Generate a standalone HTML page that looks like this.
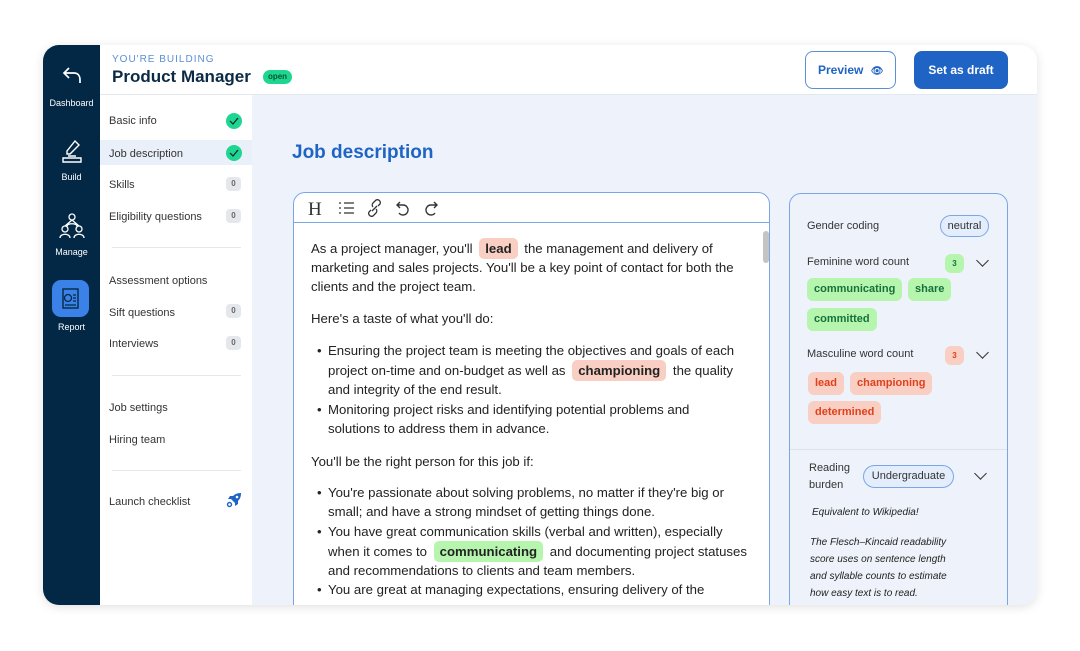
<!DOCTYPE html>
<html><head><meta charset="utf-8"><style>
*{box-sizing:border-box;margin:0;padding:0}
body{width:1080px;height:651px;background:#fff;font-family:"Liberation Sans",sans-serif;position:relative;overflow:hidden;color:#222}
.card{position:absolute;left:43px;top:45px;width:994px;height:560px;border-radius:16px;overflow:hidden;background:#eef3fb;box-shadow:0 2px 10px rgba(0,0,0,.12)}
.nav{position:absolute;left:0;top:0;width:57px;height:560px;background:#032845;color:#fff;font-size:9px;text-align:center}
.nav .it{position:absolute;left:0;width:57px}
.side{position:absolute;left:57px;top:50px;width:152px;height:510px;background:#fff}
.hdr{position:absolute;left:57px;top:0;width:937px;height:50px;background:#fff;border-bottom:1px solid #e3e8ef}
.a{position:absolute;white-space:nowrap}
.si{position:absolute;left:9px;font-size:11px;color:#333;top:2px}
.badge{position:absolute;left:126px;width:15px;height:14px;border-radius:4px;background:#e4e7eb;color:#666;font-size:8px;font-weight:bold;text-align:center;line-height:14px}
.chk{position:absolute;left:126px;width:16px;height:16px;border-radius:50%;background:#1ed68f}
.hr{position:absolute;left:12px;width:129px;height:1px;background:#e8e8e8}
.ed{position:absolute;left:250px;top:147px;width:477px;height:420px;background:#fff;border:1px solid #7aa6e6;border-radius:12px 12px 0 0}
.tb{height:30px;border-bottom:1px solid #7aa6e6}
.ln{position:absolute;font-size:13.2px;white-space:nowrap;color:#222;line-height:19px}
.hl{display:inline-block;padding:0 6px;border-radius:5px;font-weight:bold;line-height:21px;margin:0 3px}
.r{background:#f9cfc3}.g{background:#b6f5ae}
.dot{position:absolute;left:-11px}
.rp{position:absolute;left:746px;top:148px;width:219px;height:420px;background:#eef3fb;border:1px solid #7aa6e6;border-radius:12px 12px 0 0}
.t{position:absolute;font-size:11px;color:#333;white-space:nowrap}
.chip{position:absolute;height:23px;line-height:23px;padding:0 7px;border-radius:6px;font-size:11px;font-weight:bold}
.cg{background:#b6f5ae;color:#17713a}.cr{background:#f9cfc3;color:#e0401c}
.pill{position:absolute;border:1px solid #7aa6e6;border-radius:12px;background:#e4edfb;font-size:11px;color:#333;text-align:center}
.cv{position:absolute;width:9px;height:9px;border-right:1.5px solid #333;border-bottom:1.5px solid #333;transform:rotate(45deg)}
.it2{position:absolute;font-size:10px;font-style:italic;color:#222;white-space:nowrap;line-height:17px}
</style></head><body>
<div class="card">
 <div class="nav">
  <div class="it" style="top:20px"><svg width="22" height="20" viewBox="0 0 22 20"><path d="M8 3 L3 8 L8 13 M3 8 H13 C17 8 19 11 19 15 V18" fill="none" stroke="#fff" stroke-width="1.7"/></svg></div>
  <div class="it" style="top:53px">Dashboard</div>
  <div class="it" style="top:92px"><svg width="26" height="28" viewBox="0 0 26 28"><path d="M16 4 L20 8 L11 17 L8 17 L8 14 Z M4 21 H22 V25 H4 Z M9 19 H17" fill="none" stroke="#fff" stroke-width="1.4"/></svg></div>
  <div class="it" style="top:127px">Build</div>
  <div class="it" style="top:166px"><svg width="26" height="28" viewBox="0 0 26 28"><circle cx="13" cy="6" r="3" fill="none" stroke="#fff" stroke-width="1.3"/><circle cx="6" cy="18" r="3" fill="none" stroke="#fff" stroke-width="1.3"/><circle cx="20" cy="18" r="3" fill="none" stroke="#fff" stroke-width="1.3"/><path d="M13 9 L6 15 M13 9 L20 15 M1 27 C1 22 11 22 11 27 M15 27 C15 22 25 22 25 27 M8 15 C9 12 17 12 18 15" fill="none" stroke="#fff" stroke-width="1.3"/></svg></div>
  <div class="it" style="top:202px">Manage</div>
  <div style="position:absolute;left:9px;top:235px;width:37px;height:37px;border-radius:9px;background:#3b82e8"><svg width="37" height="37" viewBox="0 0 37 37"><rect x="11" y="9" width="15" height="19" fill="none" stroke="#032845" stroke-width="1.4"/><circle cx="16" cy="18" r="3.5" fill="none" stroke="#032845" stroke-width="1.3"/><path d="M21 15 H24 M21 18 H24 M21 21 H24 M13 25 H24" stroke="#032845" stroke-width="1.2"/></svg></div>
  <div class="it" style="top:277px">Report</div>
 </div>
 <div class="hdr">
  <div class="a" style="left:12px;top:9px;font-size:10px;letter-spacing:1px;color:#5b8fd6">YOU'RE BUILDING</div>
  <div class="a" style="left:12px;top:22px;font-size:17px;font-weight:bold;color:#0d2a45">Product Manager</div>
  <div class="a" style="left:163px;top:25px;width:29px;height:14px;border-radius:7px;background:#1ed68f;font-size:8px;font-weight:bold;text-align:center;line-height:14px;color:#053">open</div>
  <div class="a" style="left:705px;top:6px;width:91px;height:38px;border:1px solid #5b8fd6;border-radius:8px;color:#1f64c4;font-size:12px;font-weight:bold;line-height:36px;padding-left:12px">Preview <span style="font-size:10px;margin-left:4px">👁</span></div>
  <div class="a" style="left:814px;top:6px;width:94px;height:38px;border-radius:8px;background:#1f64c4;color:#fff;font-size:12px;font-weight:bold;line-height:38px;text-align:center">Set as draft</div>
 </div>
 <div class="side">
  <div class="si" style="top:20px">Basic info</div><div class="chk" style="top:18px"><svg width="16" height="16"><path d="M4 8 L7 11 L12 5" fill="none" stroke="#123" stroke-width="1.2"/></svg></div>
  <div style="position:absolute;left:0;top:45px;width:152px;height:25px;background:#eaf0fa"></div>
  <div class="si" style="top:53px">Job description</div><div class="chk" style="top:50px"><svg width="16" height="16"><path d="M4 8 L7 11 L12 5" fill="none" stroke="#123" stroke-width="1.2"/></svg></div>
  <div class="si" style="top:84px">Skills</div><div class="badge" style="top:82px">0</div>
  <div class="si" style="top:116px">Eligibility questions</div><div class="badge" style="top:114px">0</div>
  <div class="hr" style="top:152px"></div>
  <div class="si" style="top:180px">Assessment options</div>
  <div class="si" style="top:212px">Sift questions</div><div class="badge" style="top:209px">0</div>
  <div class="si" style="top:243px">Interviews</div><div class="badge" style="top:241px">0</div>
  <div class="hr" style="top:280px"></div>
  <div class="si" style="top:307px">Job settings</div>
  <div class="si" style="top:339px">Hiring team</div>
  <div class="hr" style="top:375px"></div>
  <div class="si" style="top:401px">Launch checklist</div>
  <svg style="position:absolute;left:126px;top:397px" width="16" height="16" viewBox="0 0 16 16"><path d="M15 1 C10 1 7 3 5 7 L9 11 C13 9 15 6 15 1 Z" fill="#1f64c4"/><path d="M5 7 L2 7 L4 4 L8 4 Z M9 11 L9 14 L12 12 L12 8 Z" fill="#1f64c4"/><circle cx="3.5" cy="12.5" r="2" fill="none" stroke="#1f64c4" stroke-width="1.4"/><circle cx="11" cy="5" r="1.3" fill="#fff"/></svg>
 </div>
 <div class="a" style="left:249px;top:97px;font-size:19px;font-weight:bold;color:#1f64c4">Job description</div>
 <div class="ed">
  <div class="tb"><svg width="160" height="30"><text x="14" y="22" font-family="Liberation Serif" font-size="19" fill="#333">H</text><path d="M45 10h2M45 15h2M45 20h2M50 10h10M50 15h10M50 20h10" stroke="#333" stroke-width="1.3"/><path d="M77 17 l-2 2 a3 3 0 0 0 4 4 l3-3 a3 3 0 0 0 0-4 M84 13 l2-2 a3 3 0 0 0-4-4 l-3 3 a3 3 0 0 0 0 4 M78 18 l5-5" fill="none" stroke="#333" stroke-width="1.3"/><path d="M106 9 l-3 3 l3 3 M103 12 h6 a5 5 0 1 1 -4 8" fill="none" stroke="#333" stroke-width="1.4"/><path d="M140 9 l3 3 l-3 3 M143 12 h-6 a5 5 0 1 0 4 8" fill="none" stroke="#333" stroke-width="1.4"/></svg></div>
  <div style="position:absolute;right:0;top:38px;width:6px;height:32px;border-radius:3px;background:#c4c4c4"></div>
 </div>
 <div class="ln" style="left:268px;top:193px">As a project manager, you'll <span class="hl r">lead</span> the management and delivery of</div>
 <div class="ln" style="left:268px;top:213px">marketing and sales projects. You'll be a key point of contact for both the</div>
 <div class="ln" style="left:268px;top:232px">clients and the project team.</div>
 <div class="ln" style="left:268px;top:264px">Here's a taste of what you'll do:</div>
 <div class="ln" style="left:285px;top:296px"><span class="dot">•</span>Ensuring the project team is meeting the objectives and goals of each</div>
 <div class="ln" style="left:285px;top:315px">project on-time and on-budget as well as <span class="hl r">championing</span> the quality</div>
 <div class="ln" style="left:285px;top:335px">and integrity of the end result.</div>
 <div class="ln" style="left:285px;top:355px"><span class="dot">•</span>Monitoring project risks and identifying potential problems and</div>
 <div class="ln" style="left:285px;top:374px">solutions to address them in advance.</div>
 <div class="ln" style="left:268px;top:407px">You'll be the right person for this job if:</div>
 <div class="ln" style="left:285px;top:438px"><span class="dot">•</span>You're passionate about solving problems, no matter if they're big or</div>
 <div class="ln" style="left:285px;top:457px">small; and have a strong mindset of getting things done.</div>
 <div class="ln" style="left:285px;top:477px"><span class="dot">•</span>You have great communication skills (verbal and written), especially</div>
 <div class="ln" style="left:285px;top:496px">when it comes to <span class="hl g">communicating</span> and documenting project statuses</div>
 <div class="ln" style="left:285px;top:516px">and recommendations to clients and team members.</div>
 <div class="ln" style="left:285px;top:535px"><span class="dot">•</span>You are great at managing expectations, ensuring delivery of the</div>
 <div class="rp">
  <div class="t" style="left:17px;top:26px">Gender coding</div>
  <div class="pill" style="left:150px;top:21px;width:49px;height:22px;line-height:20px">neutral</div>
  <div class="t" style="left:17px;top:62px">Feminine word count</div>
  <div class="chip cg" style="left:155px;top:60px;width:19px;height:19px;line-height:19px;padding:0;text-align:center;font-size:8px">3</div>
  <div class="cv" style="left:188px;top:62px"></div>
  <div class="chip cg" style="left:17px;top:84px">communicating</div>
  <div class="chip cg" style="left:118px;top:84px">share</div>
  <div class="chip cg" style="left:17px;top:114px">committed</div>
  <div class="t" style="left:17px;top:154px">Masculine word count</div>
  <div class="chip cr" style="left:155px;top:152px;width:19px;height:19px;line-height:19px;padding:0;text-align:center;font-size:8px">3</div>
  <div class="cv" style="left:188px;top:154px"></div>
  <div class="chip cr" style="left:18px;top:178px">lead</div>
  <div class="chip cr" style="left:60px;top:178px">championing</div>
  <div class="chip cr" style="left:18px;top:207px">determined</div>
  <div style="position:absolute;left:0;top:255px;width:217px;height:1px;background:#dde3ec"></div>
  <div class="t" style="left:19px;top:266px;line-height:17px">Reading<br>burden</div>
  <div class="pill" style="left:73px;top:271px;width:91px;height:23px;line-height:21px">Undergraduate</div>
  <div class="cv" style="left:186px;top:275px"></div>
  <div class="it2" style="left:22px;top:310px">Equivalent to Wikipedia!</div>
  <div class="it2" style="left:20px;top:340px">The Flesch–Kincaid readability<br>score uses on sentence length<br>and syllable counts to estimate<br>how easy text is to read.</div>
 </div>
</div>
</body></html>
